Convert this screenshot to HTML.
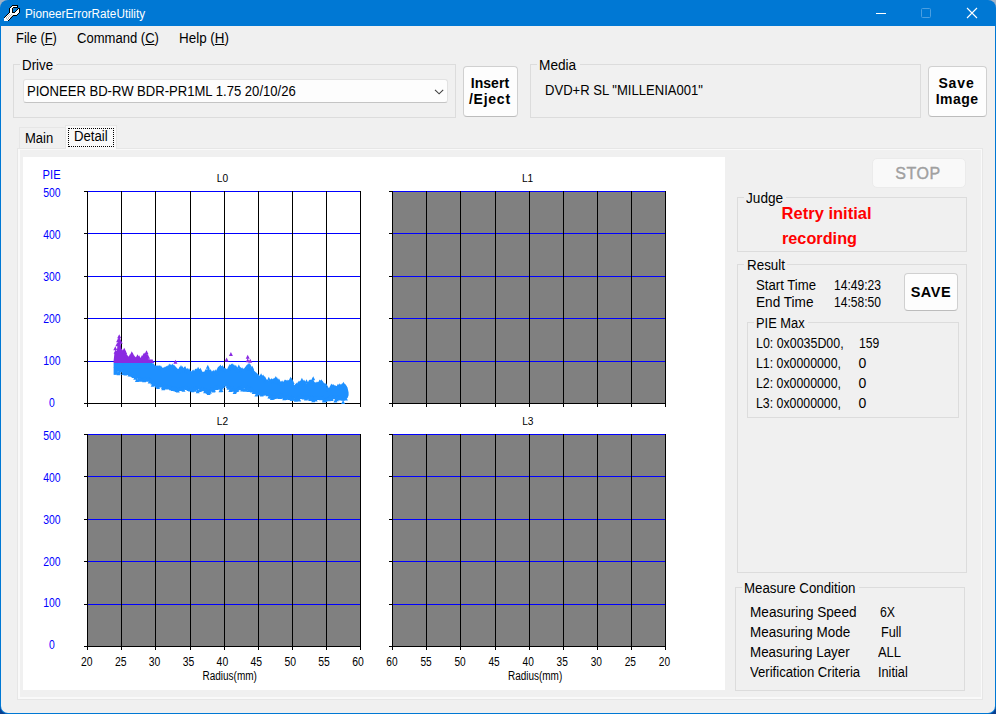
<!DOCTYPE html>
<html lang="en">
<head>
<meta charset="utf-8">
<title>PioneerErrorRateUtility</title>
<style>
html,body{margin:0;padding:0;}
body{width:996px;height:714px;overflow:hidden;position:relative;background:linear-gradient(#9fb3c8 0,#9fb3c8 20px,#0a3f8f 690px);font-family:"Liberation Sans",sans-serif;font-size:13.5px;color:#000;}
.abs{position:absolute;}
#win{position:absolute;left:0;top:0;width:996px;height:714px;background:#0078d4;border-radius:8px;overflow:hidden;}
#client{position:absolute;left:1px;top:26px;width:994px;height:687px;background:#f0f0f0;border-radius:0 0 7px 7px;}
.t{position:absolute;white-space:nowrap;transform-origin:0 0;}
.gb{position:absolute;border:1px solid #dcdcdc;box-sizing:border-box;}
.gap{position:absolute;background:#f0f0f0;height:3px;}
.btn{position:absolute;box-sizing:border-box;border:1px solid #d0d0d0;border-bottom-color:#bcbcbc;border-radius:4px;background:#fdfdfd;}
</style>
</head>
<body>
<div id="win">
<svg class="abs" style="left:4px;top:5px" width="16" height="16" viewBox="0 0 16 16" shape-rendering="crispEdges"><path fill="#000" d="M8 0h6v1h-6zM7 1h1v1h-1zM13 1h1v1h-1zM6 2h1v1h-1zM9 2h5v1h-5zM5 3h1v1h-1zM8 3h1v1h-1zM14 3h2v1h-2zM5 4h1v1h-1zM8 4h1v1h-1zM13 4h1v1h-1zM15 4h1v1h-1zM5 5h1v1h-1zM8 5h1v1h-1zM12 5h1v1h-1zM15 5h1v1h-1zM5 6h1v1h-1zM8 6h1v1h-1zM11 6h1v1h-1zM15 6h1v1h-1zM5 7h1v1h-1zM8 7h3v1h-3zM15 7h1v1h-1zM4 8h1v1h-1zM14 8h1v1h-1zM3 9h1v1h-1zM13 9h1v1h-1zM2 10h1v1h-1zM9 10h4v1h-4zM1 11h1v1h-1zM8 11h1v1h-1zM0 12h1v1h-1zM7 12h1v1h-1zM6 13h1v1h-1zM5 14h1v1h-1zM4 15h1v1h-1z"/><path fill="#fff" d="M8 1h5v1h-5zM7 2h2v1h-2zM6 3h2v1h-2zM6 4h2v1h-2zM14 4h1v1h-1zM6 5h2v1h-2zM13 5h2v1h-2zM6 6h2v1h-2zM12 6h3v1h-3zM6 7h2v1h-2zM11 7h4v1h-4zM5 8h9v1h-9zM4 9h1v1h-1zM6 9h1v1h-1zM8 9h5v1h-5zM3 10h1v1h-1zM5 10h1v1h-1zM7 10h1v1h-1zM2 11h1v1h-1zM4 11h1v1h-1zM6 11h1v1h-1zM1 12h1v1h-1zM3 12h1v1h-1zM5 12h1v1h-1zM0 13h2v1h-2zM3 13h1v1h-1zM5 13h1v1h-1zM0 14h3v1h-3zM4 14h1v1h-1zM0 15h4v1h-4z"/><path fill="#c0c0c0" d="M5 9h1v1h-1zM7 9h1v1h-1zM4 10h1v1h-1zM6 10h1v1h-1zM8 10h1v1h-1zM3 11h1v1h-1zM5 11h1v1h-1zM7 11h1v1h-1zM2 12h1v1h-1zM4 12h1v1h-1zM6 12h1v1h-1zM2 13h1v1h-1zM4 13h1v1h-1zM3 14h1v1h-1z"/><path fill="#6b7f99" d="M9 3h1v1h-1z"/></svg><div class="t" style="left:24.90px;top:6.90px;font-size:12px;line-height:14px;transform:scaleX(0.9788);color:#fff;">PioneerErrorRateUtility</div><svg class="abs" style="left:860px;top:0" width="136" height="26" viewBox="860 0 136 26" fill="none" stroke="#fff" stroke-width="1"><path d="M876 13.5h10"/><rect x="921.5" y="8.5" width="9" height="9" rx="1" stroke="#4b9fe1"/><path d="M967 8l10 10M977 8l-10 10" stroke-width="1.1"/></svg>
<div id="client"></div>
<div class="t" style="left:16.30px;top:29.80px;font-size:14px;line-height:16px;transform:scaleX(0.9228);">File (<u>F</u>)</div><div class="t" style="left:77.00px;top:29.80px;font-size:14px;line-height:16px;transform:scaleX(0.9318);">Command (<u>C</u>)</div><div class="t" style="left:179.00px;top:29.80px;font-size:14px;line-height:16px;transform:scaleX(0.9594);">Help (<u>H</u>)</div>
<div class="gb" style="left:13px;top:64px;width:443px;height:54px"></div><div class="gap" style="left:20px;top:63px;width:36px"></div><div class="t" style="left:22.30px;top:57.00px;font-size:14px;line-height:16px;transform:scaleX(0.9520);">Drive</div><div class="abs" style="left:23px;top:79px;width:425px;height:24px;box-sizing:border-box;border:1px solid #e2e2e2;border-bottom-color:#c4c4c4;border-radius:3px;background:#fdfdfd"></div><svg class="abs" style="left:433px;top:87px" width="14" height="10" viewBox="433 87 14 10" fill="none" stroke="#404040" stroke-width="1.1"><path d="M435 89.8l4.1 4 4.1-4"/></svg><div class="t" style="left:27.10px;top:82.90px;font-size:14px;line-height:16px;transform:scaleX(0.9334);">PIONEER BD-RW BDR-PR1ML 1.75 20/10/26</div>
<div class="btn" style="left:463px;top:66px;width:55px;height:51px"></div><div class="t" style="left:470.70px;top:74.80px;font-size:14px;line-height:16px;letter-spacing:0.056px;font-weight:bold;">Insert</div><div class="t" style="left:468.90px;top:90.70px;font-size:14px;line-height:16px;letter-spacing:0.770px;font-weight:bold;">/Eject</div><div class="gb" style="left:530px;top:64px;width:391px;height:54px"></div><div class="gap" style="left:537px;top:63px;width:43px"></div><div class="t" style="left:539.30px;top:57.00px;font-size:14px;line-height:16px;transform:scaleX(0.9757);">Media</div><div class="t" style="left:544.90px;top:82.20px;font-size:14px;line-height:16px;transform:scaleX(0.9325);">DVD+R SL "MILLENIA001"</div><div class="btn" style="left:928px;top:66px;width:59px;height:51px"></div><div class="t" style="left:938.40px;top:74.60px;font-size:14px;line-height:16px;letter-spacing:0.869px;font-weight:bold;">Save</div><div class="t" style="left:935.80px;top:90.70px;font-size:14px;line-height:16px;letter-spacing:0.435px;font-weight:bold;">Image</div>
<div class="abs" style="left:19px;top:127px;width:47px;height:22px;box-sizing:border-box;border:1px solid #e6e6e6;border-bottom:none;background:#f0f0f0"></div><div class="abs" style="left:65px;top:125px;width:52px;height:24px;box-sizing:border-box;border:1px solid #e6e6e6;border-bottom:none;background:#f9f9f9"></div><div class="abs" style="left:68px;top:128px;width:46px;height:19px;box-sizing:border-box;border:1px dotted #000"></div><div class="t" style="left:25.40px;top:129.70px;font-size:14px;line-height:16px;transform:scaleX(0.9294);">Main</div><div class="t" style="left:73.60px;top:127.70px;font-size:14px;line-height:16px;transform:scaleX(0.9416);">Detail</div><div class="abs" style="left:17px;top:148px;width:966px;height:552px;box-sizing:border-box;border:1px solid #e6e6e6;background:#f0f0f0;box-shadow:inset 2px 1px 0 #f9f9f9,inset -1px -2px 0 #f9f9f9"></div><div class="abs" style="left:66px;top:148px;width:50px;height:2px;background:#f9f9f9"></div>
<div class="abs" style="left:23px;top:157px;width:702px;height:533px;background:#fff"><svg class="abs" style="left:0;top:0" width="702" height="533" viewBox="23 157 702 533" font-family="Liberation Sans, sans-serif"><g shape-rendering="crispEdges"><path fill="#0000ff" d="M87 191h274v1h-274zM87 233h274v1h-274zM87 276h274v1h-274zM87 318h274v1h-274zM87 361h274v1h-274z"/><path fill="#000" d="M87 191h1v216h-1zM121 191h1v216h-1zM155 191h1v216h-1zM190 191h1v216h-1zM224 191h1v216h-1zM258 191h1v216h-1zM292 191h1v216h-1zM326 191h1v216h-1zM360 191h1v216h-1zM84 403h277v1h-277zM84 191h3v1h-3zM84 233h3v1h-3zM84 276h3v1h-3zM84 318h3v1h-3zM84 361h3v1h-3z"/><rect x="392" y="191" width="274" height="213" fill="#808080"/><path fill="#0000ff" d="M392 191h274v1h-274zM392 233h274v1h-274zM392 276h274v1h-274zM392 318h274v1h-274zM392 361h274v1h-274z"/><path fill="#000" d="M392 191h1v216h-1zM426 191h1v216h-1zM460 191h1v216h-1zM495 191h1v216h-1zM529 191h1v216h-1zM563 191h1v216h-1zM597 191h1v216h-1zM631 191h1v216h-1zM665 191h1v216h-1zM389 403h277v1h-277zM389 191h3v1h-3zM389 233h3v1h-3zM389 276h3v1h-3zM389 318h3v1h-3zM389 361h3v1h-3z"/><rect x="87" y="434" width="274" height="213" fill="#808080"/><path fill="#0000ff" d="M87 434h274v1h-274zM87 476h274v1h-274zM87 519h274v1h-274zM87 561h274v1h-274zM87 604h274v1h-274z"/><path fill="#000" d="M87 434h1v216h-1zM121 434h1v216h-1zM155 434h1v216h-1zM190 434h1v216h-1zM224 434h1v216h-1zM258 434h1v216h-1zM292 434h1v216h-1zM326 434h1v216h-1zM360 434h1v216h-1zM84 646h277v1h-277zM84 434h3v1h-3zM84 476h3v1h-3zM84 519h3v1h-3zM84 561h3v1h-3zM84 604h3v1h-3z"/><rect x="392" y="434" width="274" height="213" fill="#808080"/><path fill="#0000ff" d="M392 434h274v1h-274zM392 476h274v1h-274zM392 519h274v1h-274zM392 561h274v1h-274zM392 604h274v1h-274z"/><path fill="#000" d="M392 434h1v216h-1zM426 434h1v216h-1zM460 434h1v216h-1zM495 434h1v216h-1zM529 434h1v216h-1zM563 434h1v216h-1zM597 434h1v216h-1zM631 434h1v216h-1zM665 434h1v216h-1zM389 646h277v1h-277zM389 434h3v1h-3zM389 476h3v1h-3zM389 519h3v1h-3zM389 561h3v1h-3zM389 604h3v1h-3z"/></g><path fill="#1e90ff" d="M113.6 363.0 114.6 363.0 115.6 363.0 116.6 363.0 117.6 363.0 118.6 363.0 119.6 363.0 120.6 363.0 121.6 363.0 122.6 363.0 123.6 363.0 124.6 363.0 125.6 363.0 126.6 363.0 127.6 363.0 128.6 363.0 129.6 363.0 130.6 363.0 131.6 363.0 132.6 363.0 133.6 363.0 134.6 363.0 135.6 363.0 136.6 363.0 137.6 363.0 138.6 363.0 139.6 363.0 140.6 363.0 141.6 363.0 142.6 363.0 143.6 363.0 144.6 363.0 145.6 363.0 146.6 363.0 147.6 363.0 148.6 363.0 149.6 363.0 150.6 363.0 151.6 363.0 152.6 363.0 153.6 365.6 154.6 365.8 155.6 366.1 156.6 366.2 157.6 366.3 158.6 366.5 159.6 366.6 160.6 367.4 161.6 368.5 162.6 368.9 163.6 368.3 164.6 367.8 165.6 367.2 166.6 366.7 167.6 366.5 168.6 366.4 169.6 366.3 170.6 366.2 171.6 366.1 172.6 366.2 173.6 366.5 174.6 366.9 175.6 367.2 176.6 368.1 177.6 369.0 178.6 369.9 179.6 370.0 180.6 369.7 181.6 369.4 182.6 369.1 183.6 368.9 184.6 369.2 185.6 369.4 186.6 369.7 187.6 369.9 188.6 370.4 189.6 371.0 190.6 371.6 191.6 372.0 192.6 371.9 193.6 371.8 194.6 371.7 195.6 371.5 196.6 371.1 197.6 370.7 198.6 370.3 199.6 370.1 200.6 371.0 201.6 372.0 202.6 372.9 203.6 372.5 204.6 371.7 205.6 370.9 206.6 370.0 207.6 369.6 208.6 370.4 209.6 371.1 210.6 371.9 211.6 372.6 212.6 372.7 213.6 372.5 214.6 372.3 215.6 372.1 216.6 371.5 217.6 369.7 218.6 367.9 219.6 366.1 220.6 365.5 221.6 366.9 222.6 368.3 223.6 369.0 224.6 369.1 225.6 369.2 226.6 369.3 227.6 369.3 228.6 368.2 229.6 367.0 230.6 365.8 231.6 365.6 232.6 365.8 233.6 366.0 234.6 366.6 235.6 368.0 236.6 369.4 237.6 369.4 238.6 368.4 239.6 367.4 240.6 367.8 241.6 368.7 242.6 369.5 243.6 369.6 244.6 368.6 245.6 367.6 246.6 366.6 247.6 365.1 248.6 364.6 249.6 366.1 250.6 367.6 251.6 368.8 252.6 369.7 253.6 370.5 254.6 371.4 255.6 372.3 256.6 373.9 257.6 375.5 258.6 376.7 259.6 376.5 260.6 376.4 261.6 376.3 262.6 376.5 263.6 377.6 264.6 378.7 265.6 379.8 266.6 380.8 267.6 380.8 268.6 380.6 269.6 380.4 270.6 380.2 271.6 380.0 272.6 379.7 273.6 379.3 274.6 379.7 275.6 379.5 276.6 378.5 277.6 379.3 278.6 380.3 279.6 381.3 280.6 382.3 281.6 382.2 282.6 382.1 283.6 382.0 284.6 381.8 285.6 381.6 286.6 381.4 287.6 381.1 288.6 380.9 289.6 380.6 290.6 380.0 291.6 380.3 292.6 382.4 293.6 384.5 294.6 386.6 295.6 386.1 296.6 385.6 297.6 385.1 298.6 384.5 299.6 383.4 300.6 382.2 301.6 381.1 302.6 380.3 303.6 381.5 304.6 382.7 305.6 383.4 306.6 383.2 307.6 383.1 308.6 382.9 309.6 382.1 310.6 381.2 311.6 380.3 312.6 379.6 313.6 381.0 314.6 382.4 315.6 383.5 316.6 383.6 317.6 383.7 318.6 383.5 319.6 382.7 320.6 381.9 321.6 381.3 322.6 382.7 323.6 384.1 324.6 385.4 325.6 386.4 326.6 387.4 327.6 387.9 328.6 388.4 329.6 388.6 330.6 387.5 331.6 386.3 332.6 385.7 333.6 385.9 334.6 386.0 335.6 386.1 336.6 386.2 337.6 386.0 338.6 385.7 339.6 385.4 340.6 385.1 341.6 384.8 342.6 384.6 343.6 384.8 344.6 385.0 345.6 385.1 346.6 386.6 347.6 388.1 348.6 392.6 348.6 395.2 347.6 398.0 346.6 398.4 345.6 398.8 344.6 399.1 343.6 399.5 342.6 399.4 341.6 399.2 340.6 399.0 339.6 398.8 338.6 398.6 337.6 398.5 336.6 398.5 335.6 398.5 334.6 398.5 333.6 398.5 332.6 398.5 331.6 398.5 330.6 398.6 329.6 398.8 328.6 399.1 327.6 399.3 326.6 399.6 325.6 399.8 324.6 400.1 323.6 399.6 322.6 398.9 321.6 398.1 320.6 397.4 319.6 396.9 318.6 397.4 317.6 397.9 316.6 398.4 315.6 398.9 314.6 399.4 313.6 399.4 312.6 399.0 311.6 398.7 310.6 398.4 309.6 398.0 308.6 397.7 307.6 397.4 306.6 397.4 305.6 397.4 304.6 397.4 303.6 397.4 302.6 397.4 301.6 397.4 300.6 397.5 299.6 398.1 298.6 398.7 297.6 399.3 296.6 400.0 295.6 399.7 294.6 399.0 293.6 398.4 292.6 397.9 291.6 397.9 290.6 397.9 289.6 397.9 288.6 397.8 287.6 397.7 286.6 397.6 285.6 397.5 284.6 397.4 283.6 397.2 282.6 396.8 281.6 396.5 280.6 396.1 279.6 395.7 278.6 396.0 277.6 396.4 276.6 396.8 275.6 397.1 274.6 397.2 273.6 396.9 272.6 396.6 271.6 396.3 270.6 396.0 269.6 395.6 268.6 395.3 267.6 395.0 266.6 394.7 265.6 394.4 264.6 394.1 263.6 393.8 262.6 393.5 261.6 393.5 260.6 393.6 259.6 393.7 258.6 393.8 257.6 393.9 256.6 393.9 255.6 393.6 254.6 392.8 253.6 392.0 252.6 391.3 251.6 390.5 250.6 389.9 249.6 389.6 248.6 389.3 247.6 389.0 246.6 388.7 245.6 388.4 244.6 388.5 243.6 388.6 242.6 388.7 241.6 388.8 240.6 388.9 239.6 389.0 238.6 389.4 237.6 389.8 236.6 390.2 235.6 390.6 234.6 391.0 233.6 390.8 232.6 390.2 231.6 389.6 230.6 389.0 229.6 388.4 228.6 387.8 227.6 387.0 226.6 386.2 225.6 385.4 224.6 384.9 223.6 386.7 222.6 388.5 221.6 389.6 220.6 389.2 219.6 388.7 218.6 388.3 217.6 387.9 216.6 388.2 215.6 388.7 214.6 389.2 213.6 389.7 212.6 390.2 211.6 390.7 210.6 391.2 209.6 391.7 208.6 392.2 207.6 392.0 206.6 391.5 205.6 391.1 204.6 390.7 203.6 390.3 202.6 389.9 201.6 389.5 200.6 389.5 199.6 389.5 198.6 389.5 197.6 389.5 196.6 389.5 195.6 389.5 194.6 389.5 193.6 389.5 192.6 389.5 191.6 389.5 190.6 389.5 189.6 389.5 188.6 389.4 187.6 389.3 186.6 389.2 185.6 389.1 184.6 389.0 183.6 389.0 182.6 389.2 181.6 389.5 180.6 389.8 179.6 390.1 178.6 390.4 177.6 390.5 176.6 390.0 175.6 389.6 174.6 389.1 173.6 388.7 172.6 388.2 171.6 388.0 170.6 387.9 169.6 387.8 168.6 387.7 167.6 387.6 166.6 387.6 165.6 387.5 164.6 387.4 163.6 387.3 162.6 387.2 161.6 387.1 160.6 387.0 159.6 386.9 158.6 386.8 157.6 386.6 156.6 385.8 155.6 385.0 154.6 384.2 153.6 383.4 152.6 382.6 151.6 382.0 150.6 381.6 149.6 381.2 148.6 380.8 147.6 380.3 146.6 379.9 145.6 379.5 144.6 379.7 143.6 380.0 142.6 380.3 141.6 380.3 140.6 379.7 139.6 379.1 138.6 378.4 137.6 377.8 136.6 377.2 135.6 376.6 134.6 376.0 133.6 375.6 132.6 375.3 131.6 375.0 130.6 374.7 129.6 374.4 128.6 374.1 127.6 373.9 126.6 373.4 125.6 373.0 124.6 372.5 123.6 372.1 122.6 371.6 121.6 371.2 120.6 371.2 119.6 371.2 118.6 371.2 117.6 371.8 116.6 373.6 115.6 374.4 114.6 374.4 113.6 374.4z"/><path fill="#1e90ff" d="M113.6 367.7h4.0L115.6 363.7zM113.6 374.7h4.0L115.6 370.7zM114.6 367.0h4.0L116.6 363.0zM114.1 374.6h4.0L116.1 370.6zM115.3 367.0h4.0L117.3 363.0zM115.9 374.8h4.0L117.9 370.8zM116.5 368.2h4.0L118.5 364.2zM116.5 375.3h4.0L118.5 371.3zM117.1 367.0h4.0L119.1 363.0zM117.1 374.2h4.0L119.1 370.2zM118.3 367.9h4.0L120.3 363.9zM118.2 372.4h4.0L120.2 368.4zM119.0 368.9h4.0L121.0 364.9zM118.8 371.7h4.0L120.8 367.7zM119.8 367.0h4.0L121.8 363.0zM120.2 371.9h4.0L122.2 367.9zM120.6 368.8h4.0L122.6 364.8zM121.1 375.1h4.0L123.1 371.1zM121.5 368.9h4.0L123.5 364.9zM121.8 374.7h4.0L123.8 370.7zM122.2 367.0h4.0L124.2 363.0zM121.8 372.6h4.0L123.8 368.6zM123.0 367.0h4.0L125.0 363.0zM123.1 373.3h4.0L125.1 369.3zM123.9 367.0h4.0L125.9 363.0zM123.4 375.5h4.0L125.4 371.5zM124.7 367.0h4.0L126.7 363.0zM124.5 373.7h4.0L126.5 369.7zM125.8 367.0h4.0L127.8 363.0zM125.4 374.4h4.0L127.4 370.4zM127.0 367.0h4.0L129.0 363.0zM126.8 374.9h4.0L128.8 370.9zM127.7 367.0h4.0L129.7 363.0zM127.5 376.4h4.0L129.5 372.4zM128.5 368.8h4.0L130.5 364.8zM128.2 375.7h4.0L130.2 371.7zM129.2 368.7h4.0L131.2 364.7zM129.5 376.8h4.0L131.5 372.8zM130.4 367.0h4.0L132.4 363.0zM130.3 375.6h4.0L132.3 371.6zM131.1 367.0h4.0L133.1 363.0zM130.8 377.3h4.0L132.8 373.3zM132.2 368.1h4.0L134.2 364.1zM131.6 377.9h4.0L133.6 373.9zM132.9 368.0h4.0L134.9 364.0zM133.4 377.1h4.0L135.4 373.1zM133.6 367.0h4.0L135.6 363.0zM133.2 379.7h4.0L135.2 375.7zM134.4 368.0h4.0L136.4 364.0zM135.0 378.7h4.0L137.0 374.7zM135.4 368.3h4.0L137.4 364.3zM134.9 381.9h4.0L136.9 377.9zM136.6 368.3h4.0L138.6 364.3zM136.6 381.5h4.0L138.6 377.5zM137.6 367.3h4.0L139.6 363.3zM137.9 381.7h4.0L139.9 377.7zM138.8 368.4h4.0L140.8 364.4zM138.6 380.3h4.0L140.6 376.3zM139.8 368.7h4.0L141.8 364.7zM140.2 381.8h4.0L142.2 377.8zM140.7 368.1h4.0L142.7 364.1zM140.2 381.3h4.0L142.2 377.3zM141.7 368.9h4.0L143.7 364.9zM142.0 380.7h4.0L144.0 376.7zM142.6 367.7h4.0L144.6 363.7zM142.1 382.3h4.0L144.1 378.3zM143.6 367.8h4.0L145.6 363.8zM143.7 380.3h4.0L145.7 376.3zM144.8 367.0h4.0L146.8 363.0zM144.4 381.7h4.0L146.4 377.7zM145.5 368.7h4.0L147.5 364.7zM145.3 381.6h4.0L147.3 377.6zM146.5 367.0h4.0L148.5 363.0zM146.9 381.3h4.0L148.9 377.3zM147.3 368.0h4.0L149.3 364.0zM147.7 383.4h4.0L149.7 379.4zM148.4 368.3h4.0L150.4 364.3zM148.3 383.3h4.0L150.3 379.3zM149.2 367.0h4.0L151.2 363.0zM148.9 382.7h4.0L150.9 378.7zM150.3 368.9h4.0L152.3 364.9zM150.7 386.8h4.0L152.7 382.8zM150.9 368.4h4.0L152.9 364.4zM150.3 384.6h4.0L152.3 380.6zM151.6 367.0h4.0L153.6 363.0zM151.1 383.9h4.0L153.1 379.9zM152.2 368.6h4.0L154.2 364.6zM152.6 384.8h4.0L154.6 380.8zM153.4 369.0h4.0L155.4 365.0zM152.8 386.1h4.0L154.8 382.1zM154.3 369.2h4.0L156.3 365.2zM154.5 387.4h4.0L156.5 383.4zM155.2 369.1h4.0L157.2 365.1zM155.7 387.8h4.0L157.7 383.8zM155.8 369.9h4.0L157.8 365.9zM156.0 389.1h4.0L158.0 385.1zM157.0 368.7h4.0L159.0 364.7zM157.5 387.2h4.0L159.5 383.2zM157.8 369.5h4.0L159.8 365.5zM158.0 387.6h4.0L160.0 383.6zM158.9 369.3h4.0L160.9 365.3zM158.9 387.3h4.0L160.9 383.3zM160.0 370.9h4.0L162.0 366.9zM159.5 387.6h4.0L161.5 383.6zM160.8 371.4h4.0L162.8 367.4zM161.2 390.2h4.0L163.2 386.2zM161.5 371.6h4.0L163.5 367.6zM161.0 388.9h4.0L163.0 384.9zM162.1 370.6h4.0L164.1 366.6zM162.7 387.8h4.0L164.7 383.8zM163.0 371.0h4.0L165.0 367.0zM162.8 389.4h4.0L164.8 385.4zM164.1 369.8h4.0L166.1 365.8zM163.9 388.0h4.0L165.9 384.0zM164.9 369.9h4.0L166.9 365.9zM165.5 389.6h4.0L167.5 385.6zM165.8 369.2h4.0L167.8 365.2zM165.9 388.8h4.0L167.9 384.8zM166.4 370.0h4.0L168.4 366.0zM166.5 389.2h4.0L168.5 385.2zM167.3 367.6h4.0L169.3 363.6zM167.9 388.9h4.0L169.9 384.9zM168.5 368.1h4.0L170.5 364.1zM168.9 390.3h4.0L170.9 386.3zM169.6 368.6h4.0L171.6 364.6zM170.1 390.1h4.0L172.1 386.1zM170.3 367.5h4.0L172.3 363.5zM170.5 390.2h4.0L172.5 386.2zM171.1 368.5h4.0L173.1 364.5zM170.6 390.9h4.0L172.6 386.9zM172.0 368.5h4.0L174.0 364.5zM171.9 390.0h4.0L173.9 386.0zM172.9 369.6h4.0L174.9 365.6zM173.0 391.3h4.0L175.0 387.3zM173.8 370.6h4.0L175.8 366.6zM174.1 390.1h4.0L176.1 386.1zM174.9 371.7h4.0L176.9 367.7zM174.5 391.9h4.0L176.5 387.9zM176.1 372.8h4.0L178.1 368.8zM175.8 392.5h4.0L177.8 388.5zM176.7 373.3h4.0L178.7 369.3zM176.6 391.0h4.0L178.6 387.0zM177.7 370.5h4.0L179.7 366.5zM178.3 390.9h4.0L180.3 386.9zM178.4 372.4h4.0L180.4 368.4zM178.0 391.1h4.0L180.0 387.1zM179.0 369.0h4.0L181.0 365.0zM179.1 390.7h4.0L181.1 386.7zM179.7 371.0h4.0L181.7 367.0zM180.2 390.0h4.0L182.2 386.0zM180.4 370.1h4.0L182.4 366.1zM180.2 390.6h4.0L182.2 386.6zM181.3 371.5h4.0L183.3 367.5zM181.5 391.8h4.0L183.5 387.8zM182.4 370.6h4.0L184.4 366.6zM182.0 389.7h4.0L184.0 385.7zM183.1 370.1h4.0L185.1 366.1zM183.3 389.5h4.0L185.3 385.5zM184.2 372.4h4.0L186.2 368.4zM184.8 390.1h4.0L186.8 386.1zM185.3 371.7h4.0L187.3 367.7zM185.6 389.9h4.0L187.6 385.9zM186.1 373.5h4.0L188.1 369.5zM186.4 390.1h4.0L188.4 386.1zM187.0 371.9h4.0L189.0 367.9zM186.4 391.0h4.0L188.4 387.0zM187.8 374.0h4.0L189.8 370.0zM188.0 391.4h4.0L190.0 387.4zM188.6 374.5h4.0L190.6 370.5zM189.2 390.6h4.0L191.2 386.6zM189.6 375.0h4.0L191.6 371.0zM189.7 391.5h4.0L191.7 387.5zM190.6 373.7h4.0L192.6 369.7zM190.4 392.3h4.0L192.4 388.3zM191.3 373.6h4.0L193.3 369.6zM191.8 390.6h4.0L193.8 386.6zM192.2 375.3h4.0L194.2 371.3zM192.3 391.8h4.0L194.3 387.8zM193.3 372.4h4.0L195.3 368.4zM192.9 391.7h4.0L194.9 387.7zM194.2 372.3h4.0L196.2 368.3zM194.2 389.8h4.0L196.2 385.8zM195.1 373.1h4.0L197.1 369.1zM194.9 390.4h4.0L196.9 386.4zM196.1 370.7h4.0L198.1 366.7zM195.7 393.2h4.0L197.7 389.2zM197.2 372.4h4.0L199.2 368.4zM197.8 392.0h4.0L199.8 388.0zM198.4 371.8h4.0L200.4 367.8zM198.9 390.9h4.0L200.9 386.9zM199.1 374.1h4.0L201.1 370.1zM199.7 390.2h4.0L201.7 386.2zM200.2 375.3h4.0L202.2 371.3zM199.8 390.6h4.0L201.8 386.6zM200.8 375.7h4.0L202.8 371.7zM200.8 391.3h4.0L202.8 387.3zM201.6 375.3h4.0L203.6 371.3zM202.2 390.9h4.0L204.2 386.9zM202.8 374.7h4.0L204.8 370.7zM203.1 393.2h4.0L205.1 389.2zM203.7 372.9h4.0L205.7 368.9zM203.8 392.0h4.0L205.8 388.0zM204.7 373.1h4.0L206.7 369.1zM205.2 393.5h4.0L207.2 389.5zM205.8 368.7h4.0L207.8 364.7zM206.0 393.9h4.0L208.0 389.9zM206.5 371.2h4.0L208.5 367.2zM206.6 394.9h4.0L208.6 390.9zM207.5 373.2h4.0L209.5 369.2zM207.8 393.8h4.0L209.8 389.8zM208.6 372.9h4.0L210.6 368.9zM208.9 391.8h4.0L210.9 387.8zM209.3 374.8h4.0L211.3 370.8zM209.5 391.4h4.0L211.5 387.4zM210.5 374.7h4.0L212.5 370.7zM210.4 390.9h4.0L212.4 386.9zM211.3 373.7h4.0L213.3 369.7zM211.4 392.5h4.0L213.4 388.5zM212.2 375.4h4.0L214.2 371.4zM211.9 391.8h4.0L213.9 387.8zM213.2 373.2h4.0L215.2 369.2zM213.0 389.6h4.0L215.0 385.6zM213.9 374.2h4.0L215.9 370.2zM214.1 390.1h4.0L216.1 386.1zM214.8 374.5h4.0L216.8 370.5zM215.2 388.5h4.0L217.2 384.5zM215.6 371.7h4.0L217.6 367.7zM215.3 388.2h4.0L217.3 384.2zM216.4 370.3h4.0L218.4 366.3zM216.1 389.7h4.0L218.1 385.7zM217.4 369.7h4.0L219.4 365.7zM217.0 389.1h4.0L219.0 385.1zM218.4 368.6h4.0L220.4 364.6zM218.5 392.2h4.0L220.5 388.2zM219.4 370.1h4.0L221.4 366.1zM219.4 391.9h4.0L221.4 387.9zM220.4 369.1h4.0L222.4 365.1zM219.9 389.4h4.0L221.9 385.4zM221.4 370.3h4.0L223.4 366.3zM221.1 387.9h4.0L223.1 383.9zM222.5 371.7h4.0L224.5 367.7zM223.0 386.5h4.0L225.0 382.5zM223.5 371.7h4.0L225.5 367.7zM224.0 386.0h4.0L226.0 382.0zM224.3 372.6h4.0L226.3 368.6zM224.7 386.4h4.0L226.7 382.4zM225.5 373.0h4.0L227.5 369.0zM225.8 388.0h4.0L227.8 384.0zM226.3 370.8h4.0L228.3 366.8zM226.2 388.2h4.0L228.2 384.2zM227.0 369.3h4.0L229.0 365.3zM226.5 389.8h4.0L228.5 385.8zM227.8 368.0h4.0L229.8 364.0zM227.3 389.1h4.0L229.3 385.1zM228.7 368.5h4.0L230.7 364.5zM228.3 392.0h4.0L230.3 388.0zM229.4 367.4h4.0L231.4 363.4zM229.0 390.5h4.0L231.0 386.5zM230.2 367.2h4.0L232.2 363.2zM230.6 391.7h4.0L232.6 387.7zM231.1 367.7h4.0L233.1 363.7zM231.1 390.8h4.0L233.1 386.8zM232.2 368.6h4.0L234.2 364.6zM232.6 394.0h4.0L234.6 390.0zM233.1 369.9h4.0L235.1 365.9zM233.3 392.7h4.0L235.3 388.7zM233.8 368.7h4.0L235.8 364.7zM234.1 392.1h4.0L236.1 388.1zM234.8 371.1h4.0L236.8 367.1zM235.2 391.8h4.0L237.2 387.8zM235.7 372.2h4.0L237.7 368.2zM235.3 391.6h4.0L237.3 387.6zM236.8 368.4h4.0L238.8 364.4zM236.3 389.9h4.0L238.3 385.9zM237.5 370.6h4.0L239.5 366.6zM238.1 390.3h4.0L240.1 386.3zM238.5 371.1h4.0L240.5 367.1zM239.0 389.5h4.0L241.0 385.5zM239.1 371.5h4.0L241.1 367.5zM238.7 389.9h4.0L240.7 385.9zM240.2 371.2h4.0L242.2 367.2zM240.2 391.4h4.0L242.2 387.4zM241.2 372.1h4.0L243.2 368.1zM241.2 391.1h4.0L243.2 387.1zM242.4 372.1h4.0L244.4 368.1zM242.7 391.7h4.0L244.7 387.7zM243.2 370.7h4.0L245.2 366.7zM243.5 391.7h4.0L245.5 387.7zM243.9 370.1h4.0L245.9 366.1zM243.7 390.0h4.0L245.7 386.0zM244.7 368.7h4.0L246.7 364.7zM245.0 390.6h4.0L247.0 386.6zM245.5 368.7h4.0L247.5 364.7zM245.9 389.7h4.0L247.9 385.7zM246.2 367.0h4.0L248.2 363.0zM245.8 390.0h4.0L247.8 386.0zM247.0 368.5h4.0L249.0 364.5zM246.6 392.0h4.0L248.6 388.0zM247.7 367.0h4.0L249.7 363.0zM247.7 390.0h4.0L249.7 386.0zM248.7 370.9h4.0L250.7 366.9zM248.6 391.4h4.0L250.6 387.4zM249.3 370.8h4.0L251.3 366.8zM249.5 390.5h4.0L251.5 386.5zM250.2 369.8h4.0L252.2 365.8zM249.8 392.6h4.0L251.8 388.6zM251.1 372.6h4.0L253.1 368.6zM250.6 392.1h4.0L252.6 388.1zM252.1 374.4h4.0L254.1 370.4zM251.7 394.0h4.0L253.7 390.0zM253.1 375.5h4.0L255.1 371.5zM252.8 394.0h4.0L254.8 390.0zM254.3 376.3h4.0L256.3 372.3zM254.4 396.6h4.0L256.4 392.6zM255.3 377.2h4.0L257.3 373.2zM254.9 395.4h4.0L256.9 391.4zM256.5 378.0h4.0L258.5 374.0zM256.6 394.9h4.0L258.6 390.9zM257.3 380.0h4.0L259.3 376.0zM256.8 394.2h4.0L258.8 390.2zM258.4 378.4h4.0L260.4 374.4zM258.8 395.5h4.0L260.8 391.5zM259.1 377.2h4.0L261.1 373.2zM259.7 396.5h4.0L261.7 392.5zM260.2 379.1h4.0L262.2 375.1zM260.1 394.2h4.0L262.1 390.2zM261.2 378.6h4.0L263.2 374.6zM260.8 395.8h4.0L262.8 391.8zM262.0 380.8h4.0L264.0 376.8zM262.1 395.1h4.0L264.1 391.1zM262.8 380.0h4.0L264.8 376.0zM263.4 395.0h4.0L265.4 391.0zM263.8 382.4h4.0L265.8 378.4zM264.1 395.4h4.0L266.1 391.4zM264.8 383.5h4.0L266.8 379.5zM264.7 395.3h4.0L266.7 391.3zM265.7 383.5h4.0L267.7 379.5zM265.6 396.2h4.0L267.6 392.2zM266.8 380.8h4.0L268.8 376.8zM267.1 396.1h4.0L269.1 392.1zM267.8 383.5h4.0L269.8 379.5zM267.4 398.5h4.0L269.4 394.5zM268.7 382.8h4.0L270.7 378.8zM268.7 398.8h4.0L270.7 394.8zM269.4 382.0h4.0L271.4 378.0zM269.9 400.0h4.0L271.9 396.0zM270.6 382.6h4.0L272.6 378.6zM270.3 398.0h4.0L272.3 394.0zM271.6 382.0h4.0L273.6 378.0zM271.2 399.4h4.0L273.2 395.4zM272.6 381.4h4.0L274.6 377.4zM272.4 399.1h4.0L274.4 395.1zM273.2 383.3h4.0L275.2 379.3zM273.3 398.7h4.0L275.3 394.7zM273.8 379.9h4.0L275.8 375.9zM274.3 398.8h4.0L276.3 394.8zM275.0 381.2h4.0L277.0 377.2zM275.5 398.3h4.0L277.5 394.3zM275.7 382.8h4.0L277.7 378.8zM276.2 397.6h4.0L278.2 393.6zM276.9 382.3h4.0L278.9 378.3zM276.4 398.0h4.0L278.4 394.0zM277.6 384.4h4.0L279.6 380.4zM277.8 396.1h4.0L279.8 392.1zM278.3 385.0h4.0L280.3 381.0zM277.9 399.1h4.0L279.9 395.1zM279.1 385.3h4.0L281.1 381.3zM279.3 398.4h4.0L281.3 394.4zM280.1 384.3h4.0L282.1 380.3zM279.8 397.1h4.0L281.8 393.1zM280.9 385.5h4.0L282.9 381.5zM280.4 398.8h4.0L282.4 394.8zM282.1 384.3h4.0L284.1 380.3zM282.2 400.3h4.0L284.2 396.3zM282.9 383.6h4.0L284.9 379.6zM283.2 400.0h4.0L285.2 396.0zM283.6 383.5h4.0L285.6 379.5zM284.2 399.6h4.0L286.2 395.6zM284.2 383.9h4.0L286.2 379.9zM284.2 399.1h4.0L286.2 395.1zM284.9 384.0h4.0L286.9 380.0zM285.3 399.2h4.0L287.3 395.2zM285.9 383.6h4.0L287.9 379.6zM286.4 398.5h4.0L288.4 394.5zM286.6 384.1h4.0L288.6 380.1zM286.5 398.8h4.0L288.5 394.8zM287.6 383.8h4.0L289.6 379.8zM287.3 399.9h4.0L289.3 395.9zM288.6 380.7h4.0L290.6 376.7zM288.7 398.9h4.0L290.7 394.9zM289.7 382.0h4.0L291.7 378.0zM289.6 401.1h4.0L291.6 397.1zM290.6 384.1h4.0L292.6 380.1zM290.6 400.6h4.0L292.6 396.6zM291.5 387.4h4.0L293.5 383.4zM290.9 400.6h4.0L292.9 396.6zM292.3 388.7h4.0L294.3 384.7zM291.8 400.7h4.0L293.8 396.7zM293.4 387.7h4.0L295.4 383.7zM293.8 401.8h4.0L295.8 397.8zM294.4 386.5h4.0L296.4 382.5zM295.0 401.6h4.0L297.0 397.6zM295.1 387.9h4.0L297.1 383.9zM295.0 399.9h4.0L297.0 395.9zM296.1 385.5h4.0L298.1 381.5zM296.0 399.4h4.0L298.0 395.4zM296.9 384.7h4.0L298.9 380.7zM297.2 401.5h4.0L299.2 397.5zM297.9 384.7h4.0L299.9 380.7zM297.9 399.0h4.0L299.9 395.0zM299.1 383.8h4.0L301.1 379.8zM298.5 397.6h4.0L300.5 393.6zM299.9 381.8h4.0L301.9 377.8zM300.4 399.0h4.0L302.4 395.0zM300.9 384.0h4.0L302.9 380.0zM300.7 398.8h4.0L302.7 394.8zM302.0 383.6h4.0L304.0 379.6zM301.6 399.5h4.0L303.6 395.5zM302.7 384.4h4.0L304.7 380.4zM303.3 399.1h4.0L305.3 395.1zM303.7 386.7h4.0L305.7 382.7zM303.9 400.6h4.0L305.9 396.6zM304.5 383.3h4.0L306.5 379.3zM304.4 399.5h4.0L306.4 395.5zM305.7 386.1h4.0L307.7 382.1zM306.2 399.0h4.0L308.2 395.0zM306.5 386.1h4.0L308.5 382.1zM306.3 399.8h4.0L308.3 395.8zM307.3 383.4h4.0L309.3 379.4zM307.3 399.6h4.0L309.3 395.6zM307.9 384.0h4.0L309.9 380.0zM308.1 401.1h4.0L310.1 397.1zM308.6 383.3h4.0L310.6 379.3zM308.8 399.5h4.0L310.8 395.5zM309.3 383.7h4.0L311.3 379.7zM309.1 400.9h4.0L311.1 396.9zM310.3 382.0h4.0L312.3 378.0zM310.1 399.4h4.0L312.1 395.4zM311.2 380.2h4.0L313.2 376.2zM311.2 402.3h4.0L313.2 398.3zM312.2 385.4h4.0L314.2 381.4zM311.9 400.4h4.0L313.9 396.4zM313.2 386.2h4.0L315.2 382.2zM313.4 399.5h4.0L315.4 395.5zM313.9 385.9h4.0L315.9 381.9zM313.7 401.5h4.0L315.7 397.5zM314.8 385.5h4.0L316.8 381.5zM314.4 399.8h4.0L316.4 395.8zM315.8 385.5h4.0L317.8 381.5zM315.4 399.4h4.0L317.4 395.4zM316.7 386.4h4.0L318.7 382.4zM316.6 399.9h4.0L318.6 395.9zM317.6 383.6h4.0L319.6 379.6zM317.7 399.7h4.0L319.7 395.7zM318.4 384.1h4.0L320.4 380.1zM318.9 400.3h4.0L320.9 396.3zM319.4 383.2h4.0L321.4 379.2zM319.5 400.1h4.0L321.5 396.1zM320.6 384.8h4.0L322.6 380.8zM320.7 399.1h4.0L322.7 395.1zM321.5 386.3h4.0L323.5 382.3zM322.0 401.4h4.0L324.0 397.4zM322.4 386.8h4.0L324.4 382.8zM322.1 402.5h4.0L324.1 398.5zM323.2 389.5h4.0L325.2 385.5zM323.4 402.0h4.0L325.4 398.0zM323.9 386.8h4.0L325.9 382.8zM323.9 401.2h4.0L325.9 397.2zM324.9 390.2h4.0L326.9 386.2zM325.5 400.6h4.0L327.5 396.6zM325.7 390.1h4.0L327.7 386.1zM325.9 401.0h4.0L327.9 397.0zM326.7 392.0h4.0L328.7 388.0zM326.7 401.3h4.0L328.7 397.3zM327.7 390.7h4.0L329.7 386.7zM327.3 399.5h4.0L329.3 395.5zM328.4 389.7h4.0L330.4 385.7zM327.9 399.8h4.0L329.9 395.8zM329.1 388.1h4.0L331.1 384.1zM329.4 400.9h4.0L331.4 396.9zM329.9 387.4h4.0L331.9 383.4zM329.6 400.7h4.0L331.6 396.7zM330.8 389.0h4.0L332.8 385.0zM331.1 399.2h4.0L333.1 395.2zM331.6 388.0h4.0L333.6 384.0zM331.7 399.0h4.0L333.7 395.0zM332.5 389.0h4.0L334.5 385.0zM332.0 399.0h4.0L334.0 395.0zM333.3 389.0h4.0L335.3 385.0zM333.4 402.4h4.0L335.4 398.4zM334.5 389.8h4.0L336.5 385.8zM334.6 399.3h4.0L336.6 395.3zM335.3 389.5h4.0L337.3 385.5zM334.9 401.3h4.0L336.9 397.3zM335.9 387.8h4.0L337.9 383.8zM335.7 398.7h4.0L337.7 394.7zM336.6 388.3h4.0L338.6 384.3zM336.9 400.2h4.0L338.9 396.2zM337.7 387.3h4.0L339.7 383.3zM338.2 399.8h4.0L340.2 395.8zM338.5 388.1h4.0L340.5 384.1zM338.1 399.6h4.0L340.1 395.6zM339.2 388.4h4.0L341.2 384.4zM339.0 400.4h4.0L341.0 396.4zM339.8 387.4h4.0L341.8 383.4zM339.4 400.2h4.0L341.4 396.2zM340.7 386.8h4.0L342.7 382.8zM341.1 404.1h4.0L343.1 400.1zM341.5 385.8h4.0L343.5 381.8zM341.1 400.8h4.0L343.1 396.8zM342.6 387.5h4.0L344.6 383.5zM342.0 399.7h4.0L344.0 395.7zM343.5 388.0h4.0L345.5 384.0zM343.9 400.6h4.0L345.9 396.6z"/><path fill="#8a2be2" d="M113.6 360.9 114.4 353.4 115.2 352.0 116.0 352.7 116.8 351.3 117.6 344.6 118.4 341.1 119.2 339.5 120.0 341.5 120.8 344.7 121.6 350.9 122.4 351.3 123.2 351.2 124.0 350.2 124.8 351.2 125.6 352.7 126.4 355.2 127.2 356.3 128.0 357.1 128.8 358.0 129.6 357.4 130.4 355.9 131.2 354.4 132.0 354.1 132.8 355.6 133.6 357.3 134.4 359.0 135.2 358.6 136.0 358.3 136.8 357.9 137.6 357.7 138.4 358.7 139.2 359.6 140.0 359.6 140.8 359.6 141.6 358.7 142.4 357.7 143.2 356.7 144.0 356.0 144.8 355.7 145.6 354.8 146.4 353.3 147.2 355.2 148.0 357.5 148.8 359.5 149.6 361.5 150.4 362.1 151.2 362.1 152.0 363.0 152.5 363.0 113.6 363.0z"/><path fill="#8a2be2" d="M113.6 353.8h4.0L115.6 349.8zM114.7 354.4h4.0L116.7 350.4zM115.4 346.2h4.0L117.4 342.2zM116.1 342.3h4.0L118.1 338.3zM116.8 341.9h4.0L118.8 337.9zM117.8 342.3h4.0L119.8 338.3zM118.7 343.8h4.0L120.7 339.8zM119.4 352.4h4.0L121.4 348.4zM120.0 353.0h4.0L122.0 349.0zM121.1 353.7h4.0L123.1 349.7zM122.2 351.8h4.0L124.2 347.8zM123.3 354.3h4.0L125.3 350.3zM124.3 357.7h4.0L126.3 353.7zM125.0 358.8h4.0L127.0 354.8zM125.8 359.2h4.0L127.8 355.2zM126.6 360.4h4.0L128.6 356.4zM127.2 360.1h4.0L129.2 356.1zM127.9 358.3h4.0L129.9 354.3zM128.7 357.4h4.0L130.7 353.4zM129.8 355.2h4.0L131.8 351.2zM130.8 357.1h4.0L132.8 353.1zM131.6 359.9h4.0L133.6 355.9zM132.4 359.4h4.0L134.4 355.4zM133.2 361.0h4.0L135.2 357.0zM133.9 360.6h4.0L135.9 356.6zM134.8 360.1h4.0L136.8 356.1zM135.5 358.2h4.0L137.5 354.2zM136.2 359.9h4.0L138.2 355.9zM137.1 359.2h4.0L139.1 355.2zM138.0 361.2h4.0L140.0 357.2zM138.8 361.5h4.0L140.8 357.5zM139.9 359.2h4.0L141.9 355.2zM141.1 358.2h4.0L143.1 354.2zM142.1 356.4h4.0L144.1 352.4zM143.3 356.9h4.0L145.3 352.9zM144.5 354.2h4.0L146.5 350.2zM145.3 357.8h4.0L147.3 353.8zM146.0 358.8h4.0L148.0 354.8zM147.0 362.8h4.0L149.0 358.8zM147.8 363.0h4.0L149.8 359.0zM148.7 363.0h4.0L150.7 359.0zM149.3 363.0h4.0L151.3 359.0zM150.2 363.0h4.0L152.2 359.0zM117.2 338.2h4.0L119.2 334.2zM117.2 341.0h4.0L119.2 337.0zM113.3 350.3h4.0L115.3 346.3zM173.4 363.8h4.0L175.4 359.8zM228.9 355.9h4.0L230.9 351.9zM224.6 361.5h4.0L226.6 357.5zM245.7 358.7h4.0L247.7 354.7zM245.7 362.3h4.0L247.7 358.3zM248.2 362.7h4.0L250.2 358.7z"/><text x="51.6" y="178.9" font-size="12" fill="#0000ff" text-anchor="middle" textLength="18.0" lengthAdjust="spacingAndGlyphs">PIE</text><text x="51.9" y="196.8" font-size="12" fill="#0000ff" text-anchor="middle" textLength="17.4" lengthAdjust="spacingAndGlyphs">500</text><text x="51.9" y="238.8" font-size="12" fill="#0000ff" text-anchor="middle" textLength="17.4" lengthAdjust="spacingAndGlyphs">400</text><text x="51.9" y="280.7" font-size="12" fill="#0000ff" text-anchor="middle" textLength="17.4" lengthAdjust="spacingAndGlyphs">300</text><text x="51.9" y="322.7" font-size="12" fill="#0000ff" text-anchor="middle" textLength="17.4" lengthAdjust="spacingAndGlyphs">200</text><text x="51.9" y="364.6" font-size="12" fill="#0000ff" text-anchor="middle" textLength="17.4" lengthAdjust="spacingAndGlyphs">100</text><text x="51.9" y="406.6" font-size="12" fill="#0000ff" text-anchor="middle" textLength="5.8" lengthAdjust="spacingAndGlyphs">0</text><text x="51.9" y="439.6" font-size="12" fill="#0000ff" text-anchor="middle" textLength="17.4" lengthAdjust="spacingAndGlyphs">500</text><text x="51.9" y="481.6" font-size="12" fill="#0000ff" text-anchor="middle" textLength="17.4" lengthAdjust="spacingAndGlyphs">400</text><text x="51.9" y="523.5" font-size="12" fill="#0000ff" text-anchor="middle" textLength="17.4" lengthAdjust="spacingAndGlyphs">300</text><text x="51.9" y="565.5" font-size="12" fill="#0000ff" text-anchor="middle" textLength="17.4" lengthAdjust="spacingAndGlyphs">200</text><text x="51.9" y="607.4" font-size="12" fill="#0000ff" text-anchor="middle" textLength="17.4" lengthAdjust="spacingAndGlyphs">100</text><text x="51.9" y="649.4" font-size="12" fill="#0000ff" text-anchor="middle" textLength="5.8" lengthAdjust="spacingAndGlyphs">0</text><text x="222.5" y="182.4" font-size="10" fill="#000" text-anchor="middle" textLength="11.3" lengthAdjust="spacingAndGlyphs">L0</text><text x="527.6" y="182.4" font-size="10" fill="#000" text-anchor="middle" textLength="11.3" lengthAdjust="spacingAndGlyphs">L1</text><text x="222.5" y="425.4" font-size="10" fill="#000" text-anchor="middle" textLength="11.3" lengthAdjust="spacingAndGlyphs">L2</text><text x="527.8" y="425.4" font-size="10" fill="#000" text-anchor="middle" textLength="11.3" lengthAdjust="spacingAndGlyphs">L3</text><text x="86.8" y="666.0" font-size="12" fill="#000" text-anchor="middle" textLength="11.6" lengthAdjust="spacingAndGlyphs">20</text><text x="392.0" y="666.0" font-size="12" fill="#000" text-anchor="middle" textLength="11.3" lengthAdjust="spacingAndGlyphs">60</text><text x="120.7" y="666.0" font-size="12" fill="#000" text-anchor="middle" textLength="11.6" lengthAdjust="spacingAndGlyphs">25</text><text x="426.1" y="666.0" font-size="12" fill="#000" text-anchor="middle" textLength="11.3" lengthAdjust="spacingAndGlyphs">55</text><text x="154.6" y="666.0" font-size="12" fill="#000" text-anchor="middle" textLength="11.6" lengthAdjust="spacingAndGlyphs">30</text><text x="460.1" y="666.0" font-size="12" fill="#000" text-anchor="middle" textLength="11.3" lengthAdjust="spacingAndGlyphs">50</text><text x="188.5" y="666.0" font-size="12" fill="#000" text-anchor="middle" textLength="11.6" lengthAdjust="spacingAndGlyphs">35</text><text x="494.1" y="666.0" font-size="12" fill="#000" text-anchor="middle" textLength="11.3" lengthAdjust="spacingAndGlyphs">45</text><text x="222.4" y="666.0" font-size="12" fill="#000" text-anchor="middle" textLength="11.6" lengthAdjust="spacingAndGlyphs">40</text><text x="528.2" y="666.0" font-size="12" fill="#000" text-anchor="middle" textLength="11.3" lengthAdjust="spacingAndGlyphs">40</text><text x="256.3" y="666.0" font-size="12" fill="#000" text-anchor="middle" textLength="11.6" lengthAdjust="spacingAndGlyphs">45</text><text x="562.2" y="666.0" font-size="12" fill="#000" text-anchor="middle" textLength="11.3" lengthAdjust="spacingAndGlyphs">35</text><text x="290.2" y="666.0" font-size="12" fill="#000" text-anchor="middle" textLength="11.6" lengthAdjust="spacingAndGlyphs">50</text><text x="596.3" y="666.0" font-size="12" fill="#000" text-anchor="middle" textLength="11.3" lengthAdjust="spacingAndGlyphs">30</text><text x="324.1" y="666.0" font-size="12" fill="#000" text-anchor="middle" textLength="11.6" lengthAdjust="spacingAndGlyphs">55</text><text x="630.3" y="666.0" font-size="12" fill="#000" text-anchor="middle" textLength="11.3" lengthAdjust="spacingAndGlyphs">25</text><text x="358.0" y="666.0" font-size="12" fill="#000" text-anchor="middle" textLength="11.6" lengthAdjust="spacingAndGlyphs">60</text><text x="664.4" y="666.0" font-size="12" fill="#000" text-anchor="middle" textLength="11.3" lengthAdjust="spacingAndGlyphs">20</text><text x="229.7" y="679.6" font-size="12" fill="#000" text-anchor="middle" textLength="54.4" lengthAdjust="spacingAndGlyphs">Radius(mm)</text><text x="535.1" y="679.6" font-size="12" fill="#000" text-anchor="middle" textLength="54.2" lengthAdjust="spacingAndGlyphs">Radius(mm)</text></svg></div>
<div class="abs" style="left:872px;top:158px;width:94px;height:30px;box-sizing:border-box;border:1px solid #ebebeb;border-radius:5px;background:#f9f9f9"></div><div class="t" style="left:895.30px;top:165.00px;font-size:16px;line-height:17px;letter-spacing:0.543px;color:#a0a0a0;-webkit-text-stroke:0.4px #a0a0a0;">STOP</div><div class="gb" style="left:737px;top:197px;width:230px;height:55px"></div><div class="gap" style="left:744px;top:196px;width:42px"></div><div class="t" style="left:746.30px;top:190.00px;font-size:14px;line-height:16px;transform:scaleX(0.9727);">Judge</div><div class="t" style="left:781.60px;top:204.20px;font-size:16.5px;line-height:18px;letter-spacing:0.012px;font-weight:bold;color:#ff0000;">Retry initial</div><div class="t" style="left:781.60px;top:228.60px;font-size:16.5px;line-height:18px;transform:scaleX(0.9857);font-weight:bold;color:#ff0000;">recording</div>
<div class="gb" style="left:737px;top:264px;width:230px;height:309px"></div><div class="gap" style="left:744px;top:263px;width:43px"></div><div class="t" style="left:746.60px;top:257.00px;font-size:14px;line-height:16px;transform:scaleX(0.9576);">Result</div><div class="t" style="left:756.00px;top:276.70px;font-size:14px;line-height:16px;transform:scaleX(0.9406);">Start Time</div><div class="t" style="left:834.00px;top:276.70px;font-size:14px;line-height:16px;transform:scaleX(0.8625);">14:49:23</div><div class="t" style="left:756.00px;top:293.70px;font-size:14px;line-height:16px;transform:scaleX(0.9724);">End Time</div><div class="t" style="left:834.00px;top:293.70px;font-size:14px;line-height:16px;transform:scaleX(0.8625);">14:58:50</div><div class="btn" style="left:904px;top:273px;width:54px;height:38px"></div><div class="t" style="left:910.70px;top:283.80px;font-size:14.5px;line-height:16px;letter-spacing:0.496px;font-weight:bold;">SAVE</div><div class="gb" style="left:747px;top:322px;width:212px;height:96px"></div><div class="gap" style="left:754px;top:321px;width:54px"></div><div class="t" style="left:756.40px;top:315.00px;font-size:14px;line-height:16px;transform:scaleX(0.9187);">PIE Max</div><div class="t" style="left:756.00px;top:334.70px;font-size:14px;line-height:16px;transform:scaleX(0.8862);">L0: 0x0035D00,</div><div class="t" style="left:858.50px;top:334.70px;font-size:14px;line-height:16px;transform:scaleX(0.8692);">159</div><div class="t" style="left:756.00px;top:354.70px;font-size:14px;line-height:16px;transform:scaleX(0.8806);">L1: 0x0000000,</div><div class="t" style="left:858.50px;top:354.70px;font-size:14px;line-height:16px;">0</div><div class="t" style="left:756.00px;top:374.70px;font-size:14px;line-height:16px;transform:scaleX(0.8806);">L2: 0x0000000,</div><div class="t" style="left:858.50px;top:374.70px;font-size:14px;line-height:16px;">0</div><div class="t" style="left:756.00px;top:394.70px;font-size:14px;line-height:16px;transform:scaleX(0.8806);">L3: 0x0000000,</div><div class="t" style="left:858.50px;top:394.70px;font-size:14px;line-height:16px;">0</div>
<div class="gb" style="left:735px;top:587px;width:230px;height:104px"></div><div class="gap" style="left:742px;top:586px;width:117px"></div><div class="t" style="left:744.40px;top:580.00px;font-size:14px;line-height:16px;transform:scaleX(0.9481);">Measure Condition</div><div class="t" style="left:750.40px;top:603.80px;font-size:14px;line-height:16px;transform:scaleX(0.9706);">Measuring Speed</div><div class="t" style="left:880.00px;top:603.80px;font-size:14px;line-height:16px;transform:scaleX(0.8760);">6X</div><div class="t" style="left:750.40px;top:623.80px;font-size:14px;line-height:16px;transform:scaleX(0.9610);">Measuring Mode</div><div class="t" style="left:880.60px;top:623.80px;font-size:14px;line-height:16px;transform:scaleX(0.9044);">Full</div><div class="t" style="left:750.40px;top:643.80px;font-size:14px;line-height:16px;transform:scaleX(0.9562);">Measuring Layer</div><div class="t" style="left:878.00px;top:643.80px;font-size:14px;line-height:16px;transform:scaleX(0.9234);">ALL</div><div class="t" style="left:750.40px;top:663.80px;font-size:14px;line-height:16px;transform:scaleX(0.9371);">Verification Criteria</div><div class="t" style="left:878.30px;top:663.80px;font-size:14px;line-height:16px;transform:scaleX(0.9088);">Initial</div>
</div>
</body>
</html>
